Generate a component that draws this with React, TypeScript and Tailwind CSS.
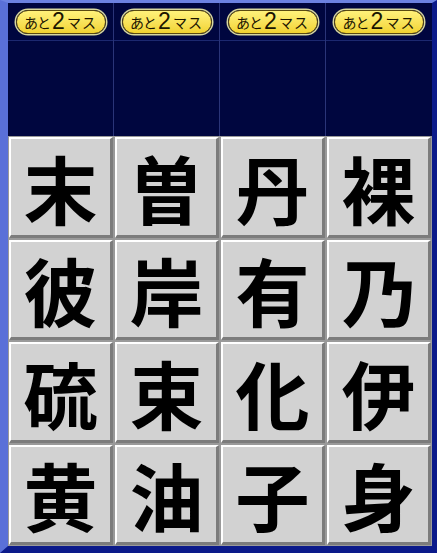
const rows = [
  ["末", "曽", "丹", "裸"],
  ["彼", "岸", "有", "乃"],
  ["硫", "束", "化", "伊"],
  ["黄", "油", "子", "身"],
];

function Badge() {
  return (
    <div className="flex items-center justify-center h-[24px] w-[90px] rounded-full border-[1.5px] border-[#5a4a10] bg-gradient-to-b from-[#fff27a] to-[#f2d32e] shadow-[0_0_0_1.5px_#d8d8a0] text-[#1a1400] font-['Noto_Sans_CJK_JP',sans-serif] leading-none">
      <span className="text-[14px] tracking-[-1px]">あと</span>
      <span className="text-[23px] mx-[2px] font-['Liberation_Sans',sans-serif]">2</span>
      <span className="text-[14px] tracking-[1px]">マス</span>
    </div>
  );
}

export default function App() {
  return (
    <div className="w-[437px] h-[553px] flex flex-col bg-[#00063f] border-l-[8px] border-t-[3px] border-r-[5px] border-b-[7px] border-l-[#5a70d8] border-t-[#6c82e2] border-r-[#0b1a8a] border-b-[#0b1a8a]">
      {/* header columns */}
      <div className="h-[133px] grid grid-cols-4 shrink-0">
        {[0, 1, 2, 3].map((i) => (
          <div
            key={i}
            className={`flex flex-col ${i < 3 ? "border-r border-[#2a3478]" : ""}`}
          >
            <div className="h-[38px] flex items-center justify-center border-b border-[#1c2870]">
              <Badge />
            </div>
            <div className="flex-1" />
          </div>
        ))}
      </div>

      {/* tiles */}
      <div className="flex-1 grid grid-cols-4 grid-rows-4 gap-[2px] bg-[#9a9a9a] p-[1px]">
        {rows.flat().map((ch, i) => (
          <div
            key={i}
            className="flex items-center justify-center bg-[#d2d2d2] border-t-[2px] border-l-[2px] border-b-[3px] border-r-[3px] border-t-white border-l-white border-b-[#7c7c7c] border-r-[#7c7c7c]"
          >
            <span className="text-[74px] font-bold leading-none text-black font-['Noto_Sans_CJK_JP',sans-serif]">
              {ch}
            </span>
          </div>
        ))}
      </div>
    </div>
  );
}
